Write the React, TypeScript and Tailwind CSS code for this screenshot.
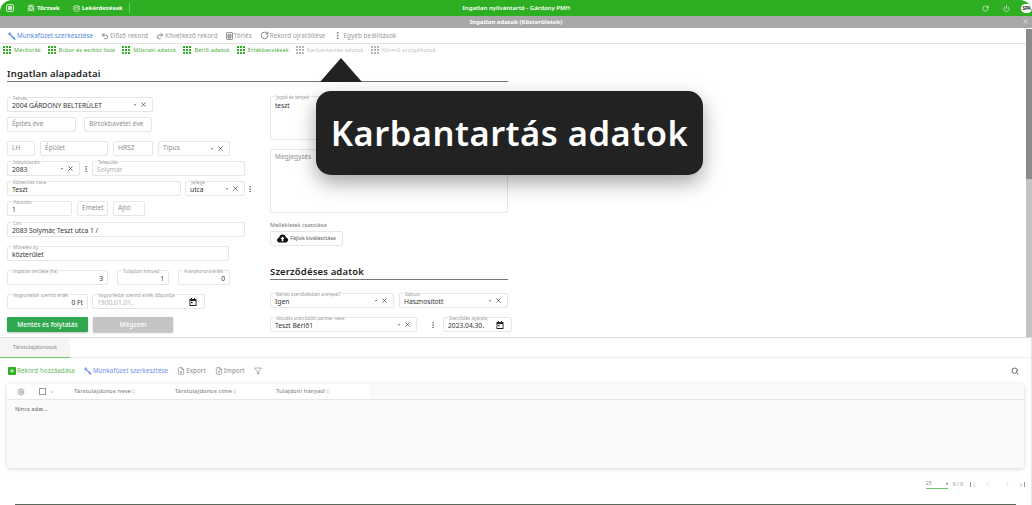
import React from "react";
import { Undo2, Redo2, RotateCw, MoreVertical, X, ChevronDown, Settings, Search, Filter, FileDown, FileUp, Power, Database, Bug, ChevronLeft, ChevronRight, ChevronsUpDown, Plus } from "lucide-react";

const font = { fontFamily: '"Noto Sans","Open Sans",sans-serif' };

function Grid3({ color }: { color: string }) {
  return (
    <svg width="8" height="8" viewBox="0 0 8 8" className="shrink-0" fill={color}>
      {[0, 3, 6].flatMap((x) => [0, 3, 6].map((y) => <rect key={`${x}-${y}`} x={x} y={y} width="2" height="2" />))}
    </svg>
  );
}

function WrenchSolid({ size = 8 }: { size?: number }) {
  return (
    <svg width={size} height={size} viewBox="0 0 10 10" fill="currentColor" className="shrink-0">
      <path d="M1 0.6 L3 0.6 L4 1.8 L3.6 3 L8.8 7.4 L9.6 9 L8.6 9.8 L7 9 L2.8 4 L1.4 4.2 L0.2 3 L0.4 1.4 L1.6 2.6 L2.4 2 Z" />
    </svg>
  );
}

function CalendarSolid() {
  return (
    <svg width="8" height="8" viewBox="0 0 8 8" className="absolute right-[7px] top-[3px]">
      <rect x="0.5" y="1" width="7" height="7" rx="0.6" fill="#222" />
      <rect x="1.4" y="3" width="5.2" height="4" fill="#fff" />
      <rect x="2" y="0" width="1" height="1.5" fill="#222" />
      <rect x="5" y="0" width="1" height="1.5" fill="#222" />
      <rect x="2" y="3.8" width="1.6" height="1.4" fill="#222" />
    </svg>
  );
}

function CloudSolid() {
  return (
    <svg width="11" height="9" viewBox="0 0 11 9" className="shrink-0">
      <path d="M3 8.6 C1 8.6 0 7.4 0 6 C0 4.7 1 3.8 2 3.7 C2.5 1.8 4 0.6 5.6 0.6 C7.4 0.6 8.6 1.8 9 3.5 C10.2 3.7 11 4.7 11 6 C11 7.4 10 8.6 8.4 8.6 Z" fill="#111" />
      <path d="M5.5 2.6 L7.6 5 L6.3 5 L6.3 7.2 L4.7 7.2 L4.7 5 L3.4 5 Z" fill="#fff" />
    </svg>
  );
}

function Field({ w, label, value, placeholder, right, select, date, muted, className = "" }: { w: string; label?: string; value?: string; placeholder?: string; right?: boolean; select?: boolean; date?: boolean; muted?: boolean; className?: string }) {
  return (
    <div className={`relative h-[15px] shrink-0 rounded-[2px] border border-[#e6e6e6] bg-white ${w} ${className}`}>
      {label && <span className="absolute left-[4px] top-[-3px] bg-white px-[1px] text-[4.5px] leading-[6px] text-[#9a9a9a] whitespace-nowrap">{label}</span>}
      <div className={`flex h-full items-center px-[4px] text-[6.7px] whitespace-nowrap ${label ? "pt-[3px]" : ""} ${right ? "justify-end" : ""} ${muted ? "text-[#b5b5b5]" : value ? "text-[#333]" : "text-[#8f8f8f]"}`}>{value ?? placeholder}</div>
      {select && (
        <div className="absolute right-[5px] top-[3px] flex items-center gap-[4px]">
          <span className="h-0 w-0 border-x-[1.5px] border-t-[2px] border-x-transparent border-t-[#777]" />
          <X size={7} strokeWidth={2.5} className="text-[#444]" />
        </div>
      )}
      {date && <CalendarSolid />}
    </div>
  );
}

function Dots() {
  return <MoreVertical size={8} strokeWidth={2.5} className="shrink-0 text-[#666]" />;
}

function Top({ icon, text, cls = "text-[#999]" }: { icon: React.ReactNode; text: string; cls?: string }) {
  return <span className={`flex items-center gap-[1px] whitespace-nowrap ${cls}`}>{icon}{text}</span>;
}

function Tab({ text, off }: { text: string; off?: boolean }) {
  return (
    <span className={`flex items-center gap-[3px] whitespace-nowrap ${off ? "text-[#c4c4c4]" : "text-[#4fae3f]"}`}>
      <Grid3 color={off ? "#b5b5b5" : "#2fae24"} />{text}
    </span>
  );
}

export default function App() {
  return (
    <div style={font} className="relative flex h-[505px] w-[1032px] flex-col overflow-hidden bg-white">
      <header className="flex h-[16px] shrink-0 items-center overflow-hidden rounded-t-[12px] bg-[#2eae23] text-white">
        <svg width="8" height="8" viewBox="0 0 8 8" fill="none" stroke="#fff" strokeWidth="0.8" className="ml-[6px] shrink-0">
          <rect x="0.5" y="0.5" width="7" height="7" rx="1.6" />
          <path d="M2.5 2.5h3v3h-3zM2.5 4h3M4 2.5v3" />
        </svg>
        <span className="ml-[13px] flex items-center gap-[2px] text-[6px] font-bold"><Bug size={8} />Törzsek</span>
        <span className="ml-[13px] flex items-center gap-[2px] border-r border-[#6cc864] pr-[6px] text-[6px] font-bold leading-[10px]"><Database size={7} />Lekérdezések</span>
        <span className="ml-[321px] w-[200px] text-center text-[6px] font-semibold">Ingatlan nyilvántartó - Gárdony PMH</span>
        <RotateCw size={7} className="ml-[400px] shrink-0" />
        <Power size={7} className="ml-[14px] shrink-0" />
        <span className="ml-[11px] h-[9px] w-[11px] shrink-0 rounded-full bg-white text-center text-[4.5px] font-bold leading-[9px] text-[#222]">SPA</span>
      </header>
      <div className="relative flex h-[12px] shrink-0 items-center justify-center bg-[#a8a8a8] text-[6px] font-bold text-white">
        Ingatlan adatok (Közterületek)
        <X size={7} strokeWidth={2} className="absolute right-[3px] top-[2px]" />
      </div>

      <div className="relative flex h-[310px] shrink-0 flex-col border-b border-[#dcdcdc]">
        <div className="absolute bottom-0 right-0 top-[1px] w-[6px] bg-[#c4c4c4]">
          <div className="h-[150px] bg-[#8a8a8a]" />
        </div>
        <div className="flex h-[16px] shrink-0 items-center gap-[8px] border-b border-[#e2e2e2] pl-[8px] text-[6.3px] tracking-[0.08px]">
          <Top cls="text-[#4d8ce0]" icon={<WrenchSolid />} text="Munkafüzet szerkesztése" />
          <Top icon={<Undo2 size={8} strokeWidth={2.5} className="text-[#777]" />} text="Előző rekord" />
          <Top icon={<Redo2 size={8} strokeWidth={2.5} className="text-[#777]" />} text="Következő rekord" />
          <Top icon={<svg width="7" height="8" viewBox="0 0 7 8" fill="none" stroke="#777" strokeWidth="0.8" className="shrink-0"><rect x="0.5" y="0.5" width="6" height="7" rx="0.6" /><path d="M2 2.5h3v3.5h-3zM3 3v2.6M4 3v2.6" /></svg>} text="Törlés" />
          <Top icon={<RotateCw size={9} strokeWidth={2} className="text-[#666]" />} text="Rekord újratöltése" />
          <Top icon={<MoreVertical size={9} strokeWidth={2.5} className="text-[#777]" />} text="Egyéb beállítások" />
        </div>
        <div className="flex h-[13px] shrink-0 items-center gap-[7px] pl-[3px] text-[5.7px] tracking-[0.11px]">
          <Tab text="Mérőórák" />
          <Tab text="Bútor és eszköz lista" />
          <Tab text="Műszaki adatok" />
          <Tab text="Bérlő adatok" />
          <Tab text="Értékbecslések" />
          <Tab off text="Karbantartás adatok" />
          <Tab off text="Közmű szolgáltatok" />
        </div>
        <div className="flex min-h-0 flex-1 overflow-hidden pl-[7px]">
          <div className="flex w-[263px] shrink-0 flex-col">
            <h2 className="mt-[10px] h-[15px] w-[501px] border-b border-[#777] text-[9.5px] font-semibold leading-[14px] tracking-[0.15px] text-[#222]">Ingatlan alapadatai</h2>
            <Field className="mt-[15px]" w="w-[146px]" label="Fekvés" value="2004 GÁRDONY BELTERÜLET" select />
            <div className="mt-[5px] flex gap-[8px]">
              <Field w="w-[69px]" placeholder="Építés éve" />
              <Field w="w-[68px]" placeholder="Birtokbavétel éve" />
            </div>
            <div className="mt-[9px] flex gap-[5px]">
              <Field w="w-[28px]" placeholder="LH" />
              <Field w="w-[68px]" placeholder="Épület" />
              <Field w="w-[40px]" placeholder="HRSZ" />
              <Field w="w-[72px]" placeholder="Típus" select />
            </div>
            <div className="mt-[5px] flex items-center">
              <Field w="w-[73px]" label="Irányítószám" value="2083" select />
              <span className="ml-[2px] mr-[2px]"><Dots /></span>
              <Field w="w-[153px]" label="Település" value="Solymár" muted />
            </div>
            <div className="mt-[5px] flex items-center">
              <Field w="w-[174px]" label="Közterület neve" value="Teszt" />
              <Field className="ml-[4px]" w="w-[60px]" label="Jellege" value="utca" select />
              <span className="ml-[1px]"><Dots /></span>
            </div>
            <div className="mt-[5px] flex gap-[5px]">
              <Field w="w-[65px]" label="Házszám" value="1" />
              <Field w="w-[31px]" placeholder="Emelet" />
              <Field w="w-[32px]" placeholder="Ajtó" />
            </div>
            <Field className="mt-[6px]" w="w-[238px]" label="Cím" value="2083 Solymár, Teszt utca 1 /" />
            <Field className="mt-[9px]" w="w-[222px]" label="Művelési ág" value="közterület" />
            <div className="mt-[9px] flex gap-[9px]">
              <Field w="w-[101px]" label="Ingatlan területe (ha)" value="3" right />
              <Field w="w-[52px]" label="Tulajdoni hányad" value="1" right />
              <Field w="w-[52px]" label="Aranykorona érték" value="0" right />
            </div>
            <div className="mt-[9px] flex gap-[4px]">
              <Field w="w-[81px]" label="Vagyonleltár szerinti érték" value="0 Ft" right />
              <Field w="w-[113px]" label="Vagyonleltár szerinti érték időpontja" value="1900.01.01." muted date />
            </div>
            <div className="mt-[8px] flex gap-[5px]">
              <button className="h-[15px] w-[81px] rounded-[1px] bg-[#2fa84f] text-[6.5px] font-medium text-white shadow-[0_1px_2px_rgba(0,0,0,0.25)]">Mentés és folytatás</button>
              <button className="h-[15px] w-[80px] rounded-[1px] bg-[#c4c4c4] text-[6.5px] font-medium text-white shadow-[0_1px_2px_rgba(0,0,0,0.25)]">Mégsem</button>
            </div>
          </div>
          <div className="flex flex-col">
            <div className="relative mt-[39px] h-[44px] w-[238px] rounded-[2px] border border-[#e6e6e6] px-[4px] pt-[4px] text-[6.5px] text-[#333]">
              <span className="absolute left-[4px] top-[-3px] bg-white px-[1px] text-[4.5px] leading-[6px] text-[#9a9a9a]">Jogok és tények</span>
              teszt
            </div>
            <div className="mt-[9px] h-[64px] w-[238px] rounded-[2px] border border-[#e6e6e6] px-[4px] pt-[2px] text-[6.5px] text-[#8f8f8f]">Megjegyzés</div>
            <div className="mt-[8px] text-[5.7px] leading-[8px] text-[#777]">Mellékletek csatolása</div>
            <button className="mt-[2px] flex h-[15px] w-[73px] items-center justify-center gap-[2px] rounded-[2px] border border-[#e6e6e6] text-[5.3px] text-[#555]">
              <CloudSolid />Fájlok kiválasztása
            </button>
            <h2 className="mt-[19px] h-[15px] w-[238px] border-b border-[#777] text-[9.5px] font-semibold leading-[14px] tracking-[0.15px] text-[#222]">Szerződéses adatok</h2>
            <div className="mt-[13px] flex gap-[5px]">
              <Field w="w-[124px]" label="Bérleti szerződésben szerepel?" value="Igen" select />
              <Field w="w-[109px]" label="Státusz" value="Hasznosított" select />
            </div>
            <div className="mt-[9px] flex items-center">
              <Field w="w-[147px]" label="Aktuális szerződött partner neve" value="Teszt Bérlő1" select />
              <span className="ml-[12px] mr-[6px]"><Dots /></span>
              <Field w="w-[69px]" label="Szerződés lejárata" value="2023.04.30." date />
            </div>
          </div>
        </div>
      </div>

      <div className="relative flex min-h-0 flex-1 flex-col border-r border-[#e8e8e8]">
        <div className="flex h-[20px] shrink-0 border-b border-[#eeeeee]">
          <div className="flex h-[20px] w-[70px] items-center justify-center border-b border-[#6cc36a] bg-[#f5f5f5] text-[5.5px] text-[#888]">Társtulajdonosok</div>
        </div>
        <div className="flex h-[26px] shrink-0 items-center gap-[9px] pl-[8px] pr-[12px] text-[6.2px] tracking-[0.1px] text-[#888]">
          <span className="flex items-center gap-[1px] whitespace-nowrap text-[#5cb85c]"><span className="flex h-[8px] w-[8px] items-center justify-center rounded-[1px] bg-[#2eae23]"><Plus size={6} strokeWidth={3} className="text-white" /></span>Rekord hozzáadása</span>
          <span className="flex items-center gap-[1px] whitespace-nowrap text-[#6f8ff0]"><WrenchSolid />Munkafüzet szerkesztése</span>
          <span className="flex items-center gap-[1px]"><FileDown size={8} />Export</span>
          <span className="flex items-center gap-[1px]"><FileUp size={8} />Import</span>
          <Filter size={8} />
          <Search size={8} strokeWidth={3} className="ml-auto text-[#666]" />
        </div>
        <div className="mx-[7px] h-[84px] shrink-0 rounded-[3px] bg-[#fafafa] shadow-[0_1px_5px_rgba(0,0,0,0.15)]">
          <div className="flex h-[16px] items-center border-b border-[#e6e6e6] text-[5.7px] font-medium tracking-[0.13px] text-[#888]">
            <div className="flex h-full w-[362px] items-center bg-white">
              <Settings size={8} className="ml-[10px] text-[#777]" />
              <span className="ml-[14px] h-[7px] w-[7px] border border-[#999]" />
              <ChevronDown size={6} className="ml-[3px]" />
              <span className="ml-[19px] flex w-[101px] items-center whitespace-nowrap">Társtulajdonos neve<ChevronsUpDown size={5} /></span>
              <span className="flex w-[101px] items-center whitespace-nowrap">Társtulajdonos címe<ChevronsUpDown size={5} /></span>
              <span className="flex items-center whitespace-nowrap">Tulajdoni hányad<ChevronsUpDown size={5} /></span>
            </div>
          </div>
          <div className="pl-[8px] pt-[5px] text-[5.7px] text-[#666]">Nincs adat...</div>
        </div>
        <div className="mt-[12px] flex items-center justify-end gap-[7px] pr-[6px] text-[5px] text-[#888]">
          <span className="mr-[-2px] flex h-[9px] w-[22px] items-center justify-between border-b border-[#6cc36a]">25<span className="h-0 w-0 border-x-[1.5px] border-t-[2px] border-x-transparent border-t-[#555]" /></span>
          <span>0 / 0</span>
          <span className="flex items-center"><span className="h-[5px] w-px bg-[#999]" /><ChevronLeft size={6} /></span>
          <ChevronLeft size={7} className="text-[#bbb]" />
          <ChevronRight size={7} className="ml-[6px] text-[#bbb]" />
          <span className="flex items-center"><ChevronRight size={6} /><span className="h-[5px] w-px bg-[#999]" /></span>
        </div>
      </div>

      <div className="absolute bottom-0 left-[15px] right-[16px] h-[1px] bg-[#5a6a5a]" />

      <div className="absolute left-[320px] top-[58px] h-0 w-0 border-x-[21.5px] border-b-[24px] border-x-transparent border-b-[#222]" />
      <div className="absolute left-[316px] top-[91px] flex h-[84px] w-[387px] items-center justify-center rounded-[15px] bg-[#222] text-[34.5px] font-semibold tracking-[0.5px] text-white shadow-[0_8px_20px_rgba(0,0,0,0.35)]">
        Karbantartás adatok
      </div>
    </div>
  );
}
